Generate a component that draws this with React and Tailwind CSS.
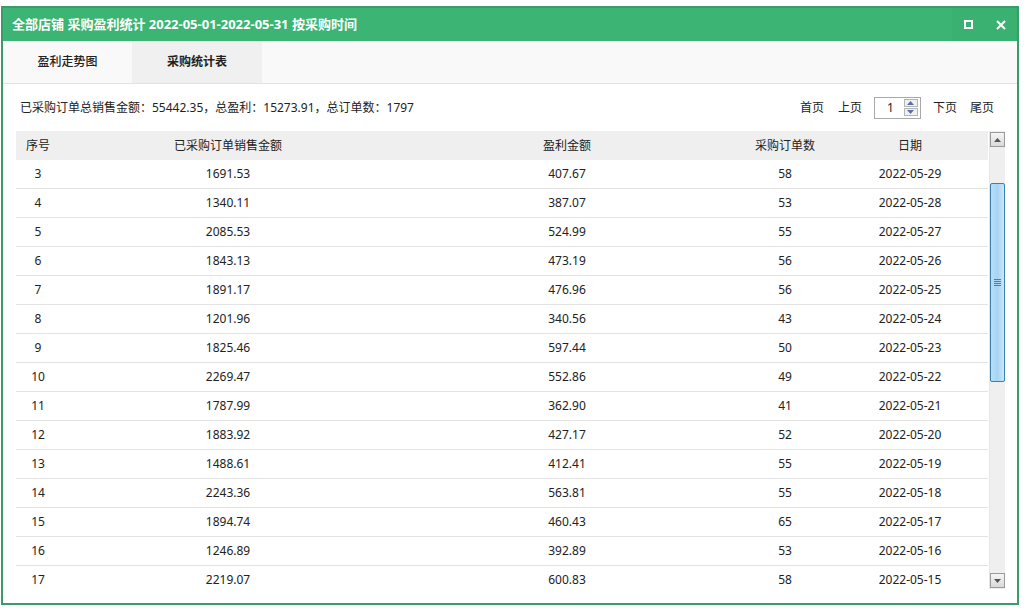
import React from "react";

const rows = [
  [3, "1691.53", "407.67", 58, "2022-05-29"],
  [4, "1340.11", "387.07", 53, "2022-05-28"],
  [5, "2085.53", "524.99", 55, "2022-05-27"],
  [6, "1843.13", "473.19", 56, "2022-05-26"],
  [7, "1891.17", "476.96", 56, "2022-05-25"],
  [8, "1201.96", "340.56", 43, "2022-05-24"],
  [9, "1825.46", "597.44", 50, "2022-05-23"],
  [10, "2269.47", "552.86", 49, "2022-05-22"],
  [11, "1787.99", "362.90", 41, "2022-05-21"],
  [12, "1883.92", "427.17", 52, "2022-05-20"],
  [13, "1488.61", "412.41", 55, "2022-05-19"],
  [14, "2243.36", "563.81", 55, "2022-05-18"],
  [15, "1894.74", "460.43", 65, "2022-05-17"],
  [16, "1246.89", "392.89", 53, "2022-05-16"],
  [17, "2219.07", "600.83", 58, "2022-05-15"],
];

const cols = "grid grid-cols-[44px_336px_342px_94px_156px]";

function Scrollbar() {
  return (
    <div className="flex w-[16px] flex-col bg-[#efefef] border-l border-[#e6e6e6]">
      <div className="mt-px flex h-[15px] w-[15px] items-center justify-center border border-[#9a9a9a] bg-gradient-to-b from-[#f6f6f6] to-[#d9d9d9]">
        <svg width="7" height="4" viewBox="0 0 7 4">
          <path d="M3.5 0 L7 4 L0 4 Z" fill="#555" />
        </svg>
      </div>
      <div className="h-[36px]" />
      <div className="flex h-[199px] w-[15px] items-center justify-center rounded-[2px] border border-[#3c7fb1] bg-gradient-to-r from-[#b9def7] via-[#a6d4f3] to-[#cbe7fa]">
        <div className="flex flex-col gap-[1px]">
          <div className="h-px w-[7px] bg-[#4a7fa8]" />
          <div className="h-px w-[7px] bg-[#4a7fa8]" />
          <div className="h-px w-[7px] bg-[#4a7fa8]" />
          <div className="h-px w-[7px] bg-[#4a7fa8]" />
        </div>
      </div>
      <div className="flex-1" />
      <div className="mb-px flex h-[15px] w-[15px] items-center justify-center border border-[#9a9a9a] bg-gradient-to-b from-[#f6f6f6] to-[#d9d9d9]">
        <svg width="7" height="4" viewBox="0 0 7 4">
          <path d="M0 0 L7 0 L3.5 4 Z" fill="#555" />
        </svg>
      </div>
    </div>
  );
}

export default function App() {
  return (
    <div
      className="h-[612px] w-[1027px] bg-white pt-[6px] pl-px text-[12px] text-[#222]"
      style={{ fontFamily: '"Noto Sans", "Noto Sans CJK SC", sans-serif' }}
    >
      <div className="flex h-[599px] w-[1018px] flex-col border-2 border-[#3a9d69] bg-white">
        {/* title bar */}
        <div className="flex h-[33px] items-stretch bg-[#3cb473] text-white">
          <div className="flex flex-1 items-center pl-[9px] text-[13px] font-bold">
            全部店铺 采购盈利统计 2022-05-01-2022-05-31 按采购时间
          </div>
          <button className="flex w-[33px] items-center justify-center bg-[#3bb171]">
            <div className="h-[9px] w-[9px] border-2 border-white" />
          </button>
          <button className="flex w-[32px] items-center justify-center bg-[#3bb171]">
            <svg width="10" height="10" viewBox="0 0 10 10">
              <path d="M1 1 L9 9 M9 1 L1 9" stroke="#fff" strokeWidth="2" />
            </svg>
          </button>
        </div>

        {/* tabs */}
        <div className="flex h-[43px] border-b border-[#e2e2e2] bg-[#f9f9f9]">
          <div className="flex w-[129px] items-center justify-center font-medium">盈利走势图</div>
          <div className="flex w-[130px] items-center justify-center bg-[#f0f0f0] font-bold">采购统计表</div>
        </div>

        {/* summary + pager */}
        <div className="flex h-[47px] items-center justify-between pl-[17px] pr-[23px]">
          <div>已采购订单总销售金额：55442.35，总盈利：15273.91，总订单数：1797</div>
          <div className="flex items-center">
            <span>首页</span>
            <span className="ml-[14px]">上页</span>
            <div className="ml-[12px] flex h-[22px] w-[47px] items-center border border-[#a9a9a9] bg-white">
              <span className="ml-[12px] flex-1">1</span>
              <div className="mr-[2px] flex flex-col gap-px">
                <div className="flex h-[8px] w-[14px] items-center justify-center border border-[#b5b5b5] bg-[#eef0f4]">
                  <svg width="7" height="4" viewBox="0 0 7 4"><path d="M3.5 0 L7 4 L0 4 Z" fill="#5a6ea8" /></svg>
                </div>
                <div className="flex h-[8px] w-[14px] items-center justify-center border border-[#b5b5b5] bg-[#eef0f4]">
                  <svg width="7" height="4" viewBox="0 0 7 4"><path d="M0 0 L7 0 L3.5 4 Z" fill="#5a6ea8" /></svg>
                </div>
              </div>
            </div>
            <span className="ml-[12px]">下页</span>
            <span className="ml-[13px]">尾页</span>
          </div>
        </div>

        {/* table */}
        <div className="ml-[13px] flex h-[458px] w-[989px]">
          <div className="w-[973px] overflow-hidden">
            <div className={`${cols} h-[29px] w-[972px] items-center bg-[#efefef] text-center`}>
              <div>序号</div>
              <div>已采购订单销售金额</div>
              <div>盈利金额</div>
              <div>采购订单数</div>
              <div>日期</div>
            </div>
            {rows.map((r) => (
              <div
                key={r[0]}
                className={`${cols} h-[29px] w-[972px] items-center border-b border-[#e3e3e3] text-center`}
              >
                <div>{r[0]}</div>
                <div>{r[1]}</div>
                <div>{r[2]}</div>
                <div>{r[3]}</div>
                <div>{r[4]}</div>
              </div>
            ))}
          </div>
          <Scrollbar />
        </div>
      </div>
    </div>
  );
}
